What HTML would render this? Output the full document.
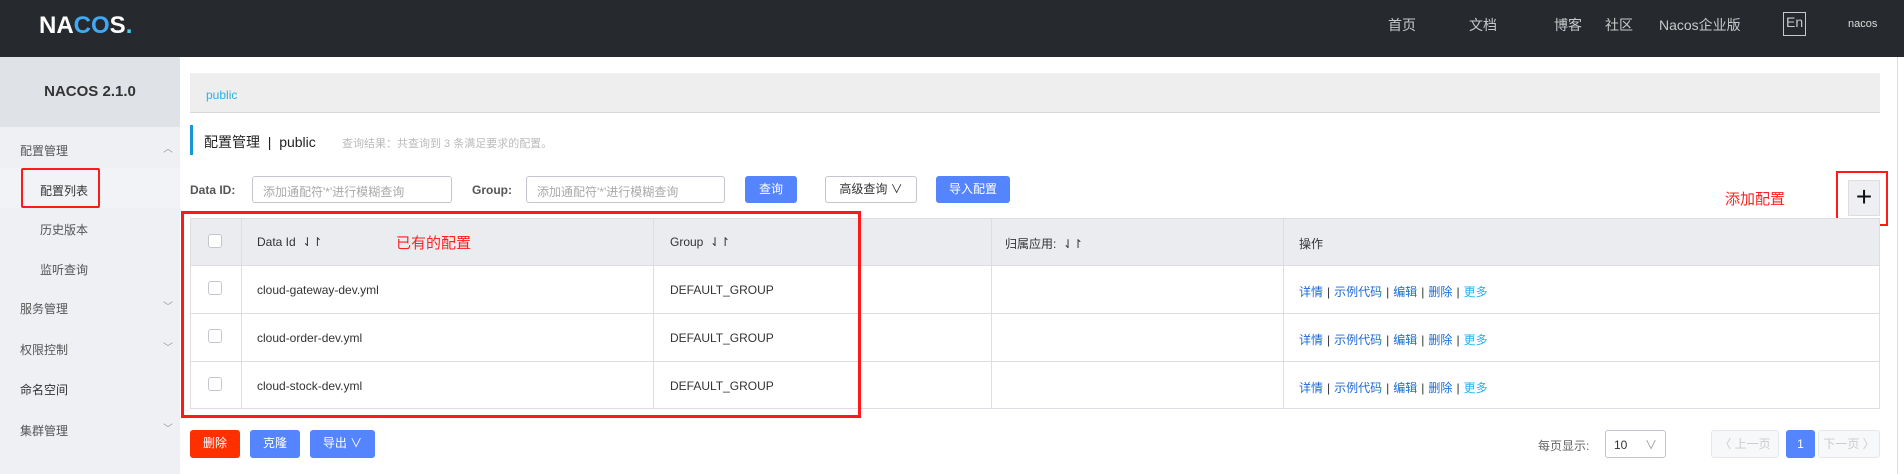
<!DOCTYPE html>
<html><head><meta charset="utf-8"><style>
*{margin:0;padding:0;box-sizing:border-box}
body{width:1904px;height:474px;overflow:hidden;background:#fff;font-family:"Liberation Sans","Noto Sans CJK SC",sans-serif;position:relative;color:#333}
.a{position:absolute;white-space:nowrap}
.hd{left:0;top:0;width:1904px;height:57px;background:#262a2f}
.nav{top:15px;font-size:14px;color:#c8c8c8}
.sb{left:0;top:57px;width:180px;height:417px;background:#eef0f4}
.sbt{left:0;top:57px;width:180px;height:70px;background:#dfe2e7}
.mi{left:20px;font-size:12px;color:#555}
.si{left:40px;font-size:12px;color:#555}
.arr{left:163px;font-size:10px;color:#999}
.inp{height:27px;border:1px solid #c4c6cf;border-radius:3px;font-size:12px;color:#aaa;padding:6px 10px;background:#fff}
.btn{height:27px;border-radius:3px;font-size:12px;color:#fff;text-align:center;line-height:27px;background:#5584ff}
.lbl{font-size:12px;font-weight:bold;color:#555}
.th{font-size:12px;color:#333}
.td{font-size:12px;color:#333}
.cb{width:14px;height:14px;border:1px solid #c4c6cf;border-radius:3px;background:#fff}
.op{font-size:12px;color:#1c6ad8}
.op i{font-style:normal;color:#333;margin:0 4px}
.op b{font-weight:normal;color:#1eb6f0}
.red{border:2px solid #ff1a1a}
</style></head><body>
<div class="a hd"></div>
<div class="a" style="left:39px;top:12px;font-size:24px;font-weight:bold;color:#fff;letter-spacing:0px">NA<span style="color:#3fa9f5">CO</span>S<span style="color:#3fd0f0">.</span></div>
<div class="a nav" style="left:1388px">首页</div>
<div class="a nav" style="left:1469px">文档</div>
<div class="a nav" style="left:1554px">博客</div>
<div class="a nav" style="left:1605px">社区</div>
<div class="a nav" style="left:1659px">Nacos企业版</div>
<div class="a nav" style="left:1783px;top:12px;border:1px solid #c8c8c8;padding:1px 2px;height:24px">En</div>
<div class="a" style="left:1848px;top:18px;font-size:11px;color:#ddd">nacos</div>

<div class="a sb"></div>
<div class="a sbt"></div>
<div class="a" style="left:0;top:83px;width:180px;text-align:center;font-size:15px;font-weight:bold;color:#333">NACOS 2.1.0</div>
<div class="a" style="left:0;top:168px;width:180px;height:40px;background:#f2f3f6"></div>
<div class="a mi" style="top:142px">配置管理</div><div class="a arr" style="top:140px">︿</div>
<div class="a si" style="top:182px;color:#333">配置列表</div>
<div class="a red" style="left:21px;top:168px;width:79px;height:40px;border-radius:2px"></div>
<div class="a si" style="top:221px">历史版本</div>
<div class="a si" style="top:261px">监听查询</div>
<div class="a mi" style="top:300px">服务管理</div><div class="a arr" style="top:298px">﹀</div>
<div class="a mi" style="top:341px">权限控制</div><div class="a arr" style="top:339px">﹀</div>
<div class="a mi" style="top:381px;color:#333">命名空间</div>
<div class="a mi" style="top:422px">集群管理</div><div class="a arr" style="top:420px">﹀</div>

<div class="a" style="left:1897px;top:57px;width:1px;height:417px;background:#ddd"></div>

<div class="a" style="left:190px;top:73px;width:1690px;height:40px;background:#eeeeee;border-bottom:1px solid #d6d6d6"></div>
<div class="a" style="left:206px;top:88px;font-size:12px;color:#2eafe3">public</div>
<div class="a" style="left:190px;top:125px;width:3px;height:30px;background:#1a95d6"></div>
<div class="a" style="left:204px;top:132px;font-size:14px;color:#222">配置管理 &nbsp;|&nbsp; public</div>
<div class="a" style="left:342px;top:135px;font-size:11px;color:#bbb">查询结果：共查询到 3 条满足要求的配置。</div>

<div class="a lbl" style="left:190px;top:183px">Data ID:</div>
<div class="a inp" style="left:252px;top:176px;width:200px">添加通配符'*'进行模糊查询</div>
<div class="a lbl" style="left:472px;top:183px">Group:</div>
<div class="a inp" style="left:526px;top:176px;width:199px">添加通配符'*'进行模糊查询</div>
<div class="a btn" style="left:745px;top:176px;width:52px">查询</div>
<div class="a btn" style="left:825px;top:176px;width:92px;background:#fff;border:1px solid #c4c6cf;color:#333;line-height:25px">高级查询 ∨</div>
<div class="a btn" style="left:936px;top:176px;width:74px">导入配置</div>
<div class="a" style="left:1725px;top:188px;font-size:15px;color:#ff2020">添加配置</div>
<div class="a" style="left:1848px;top:180px;width:32px;height:36px;background:#eeeff2;border:1px solid #ddd;text-align:center;font-size:28px;line-height:32px;color:#111">+</div>
<div class="a red" style="left:1836px;top:171px;width:52px;height:55px"></div>

<div class="a" style="left:190px;top:218px;width:1690px;height:191px;border:1px solid #dcdee3"></div>
<div class="a" style="left:191px;top:219px;width:1688px;height:46px;background:#ebecf0"></div>
<div class="a" style="left:190px;top:265px;width:1690px;height:1px;background:#dcdee3"></div>
<div class="a" style="left:190px;top:313px;width:1690px;height:1px;background:#dcdee3"></div>
<div class="a" style="left:190px;top:361px;width:1690px;height:1px;background:#dcdee3"></div>
<div class="a" style="left:241px;top:218px;width:1px;height:191px;background:#dcdee3"></div>
<div class="a" style="left:653px;top:218px;width:1px;height:191px;background:#dcdee3"></div>
<div class="a" style="left:991px;top:218px;width:1px;height:191px;background:#dcdee3"></div>
<div class="a" style="left:1283px;top:218px;width:1px;height:191px;background:#dcdee3"></div>
<div class="a cb" style="left:208px;top:234px"></div>
<div class="a cb" style="left:208px;top:281px"></div>
<div class="a cb" style="left:208px;top:329px"></div>
<div class="a cb" style="left:208px;top:377px"></div>
<div class="a th" style="left:257px;top:235px">Data Id &nbsp;⇃↾</div>
<div class="a" style="left:396px;top:232px;font-size:15px;color:#ff2020">已有的配置</div>
<div class="a th" style="left:670px;top:235px">Group &nbsp;⇃↾</div>
<div class="a th" style="left:1005px;top:235px">归属应用: &nbsp;⇃↾</div>
<div class="a th" style="left:1299px;top:235px">操作</div>
<div class="a td" style="left:257px;top:283px">cloud-gateway-dev.yml</div>
<div class="a td" style="left:670px;top:283px">DEFAULT_GROUP</div>
<div class="a td" style="left:257px;top:331px">cloud-order-dev.yml</div>
<div class="a td" style="left:670px;top:331px">DEFAULT_GROUP</div>
<div class="a td" style="left:257px;top:379px">cloud-stock-dev.yml</div>
<div class="a td" style="left:670px;top:379px">DEFAULT_GROUP</div>
<div class="a op" style="left:1299px;top:283px">详情<i>|</i>示例代码<i>|</i>编辑<i>|</i>删除<i>|</i><b>更多</b></div>
<div class="a op" style="left:1299px;top:331px">详情<i>|</i>示例代码<i>|</i>编辑<i>|</i>删除<i>|</i><b>更多</b></div>
<div class="a op" style="left:1299px;top:379px">详情<i>|</i>示例代码<i>|</i>编辑<i>|</i>删除<i>|</i><b>更多</b></div>
<div class="a red" style="left:181px;top:211px;width:680px;height:207px;border-width:3px"></div>

<div class="a btn" style="left:190px;top:430px;width:50px;height:28px;background:#ff3000">删除</div>
<div class="a btn" style="left:250px;top:430px;width:50px;height:28px">克隆</div>
<div class="a btn" style="left:310px;top:430px;width:65px;height:28px">导出 ∨</div>

<div class="a" style="left:1538px;top:437px;font-size:12px;color:#666">每页显示:</div>
<div class="a" style="left:1605px;top:430px;width:61px;height:28px;border:1px solid #c4c6cf;border-radius:3px;font-size:12px;padding:7px 8px;color:#333">10<span style="position:absolute;right:8px;top:5px;color:#999">∨</span></div>
<div class="a" style="left:1711px;top:430px;width:68px;height:28px;border:1px solid #e6e7eb;background:#f7f8fa;border-radius:3px;font-size:12px;color:#ccc;text-align:center;line-height:26px">〈 上一页</div>
<div class="a" style="left:1786px;top:430px;width:29px;height:28px;background:#5584ff;border-radius:3px;font-size:12px;color:#fff;text-align:center;line-height:28px">1</div>
<div class="a" style="left:1818px;top:430px;width:62px;height:28px;border:1px solid #e6e7eb;background:#f7f8fa;border-radius:3px;font-size:12px;color:#ccc;text-align:center;line-height:26px">下一页 〉</div>
</body></html>
